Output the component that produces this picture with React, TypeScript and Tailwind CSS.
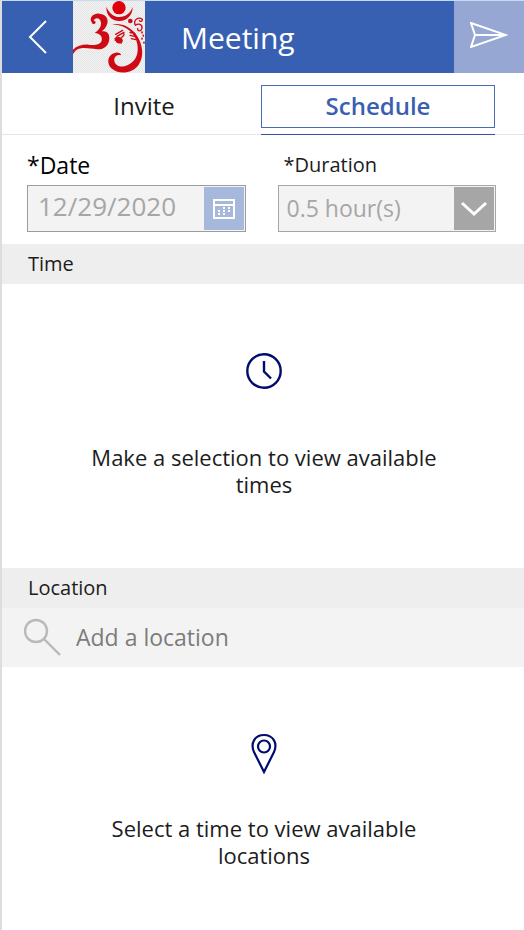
import type { ReactNode } from "react";

function Logo() {
  return (
    <svg viewBox="0 0 216 216" className="h-[72px] w-[72px] shrink-0" role="img" aria-label="Organisation logo">
      <defs>
        <pattern id="weave" width="6" height="6" patternUnits="userSpaceOnUse">
          <rect width="6" height="6" fill="#f1f1f1" />
          <rect width="3" height="3" fill="#e6e6e6" />
          <rect x="3" y="3" width="3" height="3" fill="#e6e6e6" />
        </pattern>
      </defs>
      <rect width="216" height="216" fill="url(#weave)" />
      <g fill="#cf0a14">
        <circle cx="138" cy="20" r="20" fill="#e0000c" />
        <path d="M100 17C99 42 116 60 139 60C162 60 179 43 179 18C172 37 158 48 139 48C121 48 108 36 100 17Z" />
        <circle cx="172" cy="60" r="7" />
        <path d="M57 65C46 53 60 36 79 38C101 39 109 57 101 73C97 82 92 87 86 91C101 88 110 97 109 113C108 133 93 146 73 145C48 142 26 137 10 147C6 150 3 155 0 160L0 146C12 134 29 130 47 131C66 133 82 131 86 119C89 107 81 97 65 96C76 88 85 78 84 65C82 48 65 48 62 59C70 59 70 69 61 69C59 69 58 67 57 65Z" />
        <path d="M118 70C146 65 172 78 188 99C209 126 215 165 197 191C181 216 138 223 115 202C98 185 106 158 128 155C138 154 145 158 144 163C132 159 122 168 124 180C127 196 146 201 163 193C187 182 198 161 193 130C188 99 162 73 118 70Z" />
        <path d="M124 112C131 103 146 107 149 116C152 126 139 130 131 125Z" />
      </g>
      <g fill="none" stroke="#cf0a14" strokeWidth="4" strokeLinecap="round">
        <path d="M128 100L149 88M132 106L153 94M152 97C155 101 151 106 146 109M126 117L145 126" />
        <path d="M171 94C177 98 183 91 186 99M171 103L188 107M175 113L189 116" />
        <path d="M186 71C181 55 197 47 207 54C211 59 203 64 199 59M187 73C196 66 208 70 207 81C205 93 193 91 194 83" />
        <path d="M207 93V95M211 103V105M207 112V114M213 124V126" strokeWidth="5" />
      </g>
    </svg>
  );
}

function SectionTitle({ children }: { children: ReactNode }) {
  return <h2 className="flex h-10 items-center bg-[#eeeeee] px-[26px] text-xl text-[#1c1c1c]">{children}</h2>;
}

function EmptyState({ icon, children }: { icon: ReactNode; children: ReactNode }) {
  return (
    <div className="flex flex-col items-center pt-16 pr-20 pl-[82px] text-center">
      {icon}
      <p className="text-[22px] leading-[27px] text-[#1c1c1c]">{children}</p>
    </div>
  );
}

export default function App() {
  return (
    <main className="min-h-screen border-t border-l-2 border-t-[#c5dbf3] border-l-[#dddddd] bg-white font-['Open_Sans',sans-serif]">
      <header className="flex h-[72px] bg-[#3860b2] text-white">
        <button type="button" aria-label="Back" className="flex w-[71px] items-center justify-center">
          <svg width="20" height="34" viewBox="0 0 20 34" fill="none" stroke="currentColor" strokeWidth="2">
            <path d="M18 1L2 17L18 33" />
          </svg>
        </button>
        <Logo />
        <h1 className="flex grow items-center pl-9 text-[30px]">Meeting</h1>
        <button type="button" aria-label="Send" className="flex w-[70px] items-center justify-center bg-[#95a7d2] pb-1">
          <svg width="38" height="26" viewBox="0 0 38 26" fill="none" stroke="currentColor" strokeWidth="2">
            <path d="M1 1L36 13L1 25L5 13ZM5 13H36" />
          </svg>
        </button>
      </header>

      <nav className="grid h-[62px] grid-cols-2 border-b border-[#e4e4e8] pt-3 pr-[29px] pl-[25px]">
        <button type="button" className="h-[43px] pb-0.5 text-2xl text-[#1c1c1c]">
          Invite
        </button>
        <div className="-mb-px border-b border-[#2f52a3]">
          <button type="button" aria-current="page" className="h-[43px] w-full border border-[#4a6bb5] pb-0.5 text-2xl font-semibold text-[#3b5fb0]">
            Schedule
          </button>
        </div>
      </nav>

      <form className="grid grid-cols-2 gap-8 pt-3 pr-7 pb-3 pl-[25px]">
        <div className="flex flex-col gap-0.5">
          <label htmlFor="date" className="flex h-9 items-center text-[23px] text-black">
            *Date
          </label>
          <div className="flex h-[47px] border border-[#9c9c9c] bg-[#f3f3f3] p-px">
            <input id="date" type="text" disabled defaultValue="12/29/2020" className="w-0 grow px-[9px] pb-1 text-[26px] text-[#a6a6a6]" />
            <button type="button" disabled aria-label="Open calendar" className="flex w-10 items-center justify-center bg-[#a6b8dc] text-white">
              <svg width="22" height="20" viewBox="0 0 22 20" fill="none" stroke="currentColor" strokeWidth="2">
                <path d="M1 1H21V19H1ZM1 6H21" />
                <path d="M10 9H12M15 9H17M5 12H7M10 12H12M15 12H17M5 15H7M10 15H12" />
              </svg>
            </button>
          </div>
        </div>
        <div className="flex flex-col gap-0.5">
          <label htmlFor="duration" className="flex h-9 items-center pl-1.5 text-xl text-[#1c1c1c]">
            *Duration
          </label>
          <div className="grid h-[47px] grid-cols-[1fr_40px] border border-[#a6a6a6] bg-[#f3f3f3] p-px">
            <select id="duration" disabled className="col-span-2 col-start-1 row-start-1 appearance-none px-[7px] text-[23px] text-[#a6a6a6] opacity-100">
              <option>0.5 hour(s)</option>
            </select>
            <span className="pointer-events-none col-start-2 row-start-1 flex items-center justify-center bg-[#a6a6a6] text-white">
              <svg width="26" height="16" viewBox="0 0 26 16" fill="none" stroke="currentColor" strokeWidth="3">
                <path d="M1 2L13 13L25 2" />
              </svg>
            </span>
          </div>
        </div>
      </form>

      <section className="pb-[70px]">
        <SectionTitle>Time</SectionTitle>
        <EmptyState
          icon={
            <svg className="mb-[50px]" width="46" height="46" viewBox="0 0 46 46" fill="none" stroke="#000c70" strokeWidth="2.4">
              <circle cx="23" cy="23" r="16.7" />
              <path d="M23 13V23.500L30 30.500" />
            </svg>
          }
        >
          Make a selection to view available times
        </EmptyState>
      </section>

      <section>
        <SectionTitle>Location</SectionTitle>
        <div className="flex h-[59px] items-center gap-3.5 bg-[#f3f3f3] px-[22px]">
          <svg className="mb-0.5" width="38" height="38" viewBox="0 0 38 38" fill="none" stroke="#b9b9b9" strokeWidth="2.4">
            <circle cx="12" cy="13" r="11" />
            <path d="M20 21L36 37" />
          </svg>
          <input type="text" aria-label="Add a location" placeholder="Add a location" className="w-0 grow text-[23px] text-[#1c1c1c] placeholder:text-[#7c7c7c]" />
        </div>
        <EmptyState
          icon={
            <svg className="mb-[38px]" width="46" height="46" viewBox="0 0 46 46" fill="none" stroke="#000c70" strokeWidth="2.2">
              <path d="M23 41L13 21C9 12 14 4 23 4C32 4 37 12 33 21Z" />
              <circle cx="23" cy="15.500" r="6" />
            </svg>
          }
        >
          Select a time to view available locations
        </EmptyState>
      </section>
    </main>
  );
}
